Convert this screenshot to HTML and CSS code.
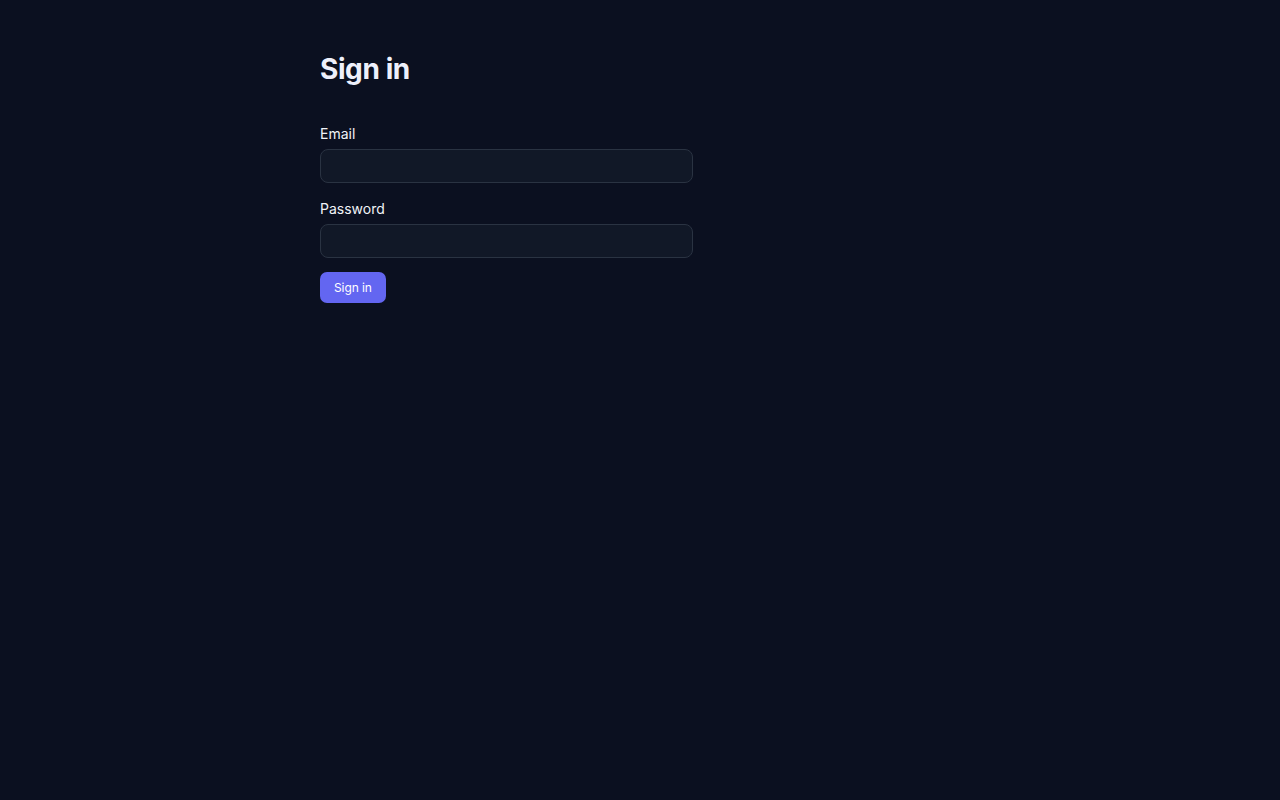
FILE: index.html
```html
<!DOCTYPE html>
<html lang="en">
<head>
<meta charset="utf-8">
<title>Sign in</title>
<link rel="stylesheet" href="styles.css">
</head>
<body>
<main class="page">
  <h1 class="title">Sign in</h1>
  <form class="form">
    <div class="field">
      <label class="label" for="email">Email</label>
      <input class="input" id="email" type="email">
    </div>
    <div class="field">
      <label class="label" for="password">Password</label>
      <input class="input" id="password" type="password">
    </div>
    <button class="button" type="button">Sign in</button>
  </form>
</main>
</body>
</html>
```

FILE: styles.css
```css
html, body {
  margin: 0;
  padding: 0;
  background: #0b1020;
  font-family: Inter, "Noto Sans", sans-serif;
  color: #e5e7eb;
}
.page {
  max-width: 640px;
  margin: 0 auto;
  padding-top: 52px;
}
.title {
  margin: 0 0 38px;
  font-size: 28px;
  line-height: 34px;
  font-weight: 700;
  letter-spacing: -0.4px;
  color: #eef0fb;
}
.form {
  display: flex;
  flex-direction: column;
  align-items: flex-start;
  width: 373px;
}
.field {
  display: flex;
  flex-direction: column;
  gap: 5px;
  width: 100%;
  margin-bottom: 16px;
}
.field + .field {
  margin-bottom: 14px;
}
.label {
  font-size: 14px;
  line-height: 20px;
  color: #f1f3f7;
}
.input {
  box-sizing: border-box;
  width: 100%;
  height: 34px;
  margin: 0;
  padding: 0 10px;
  background: #111827;
  border: 1px solid #2a3342;
  border-radius: 8px;
  color: #e5e7eb;
  font-family: inherit;
  font-size: 14px;
  outline: none;
}
.button {
  height: 31px;
  padding: 0 14px;
  background: #6366f1;
  color: #ffffff;
  border: none;
  border-radius: 7px;
  font-family: inherit;
  font-size: 12px;
  font-weight: 400;
  letter-spacing: -0.1px;
}
```
